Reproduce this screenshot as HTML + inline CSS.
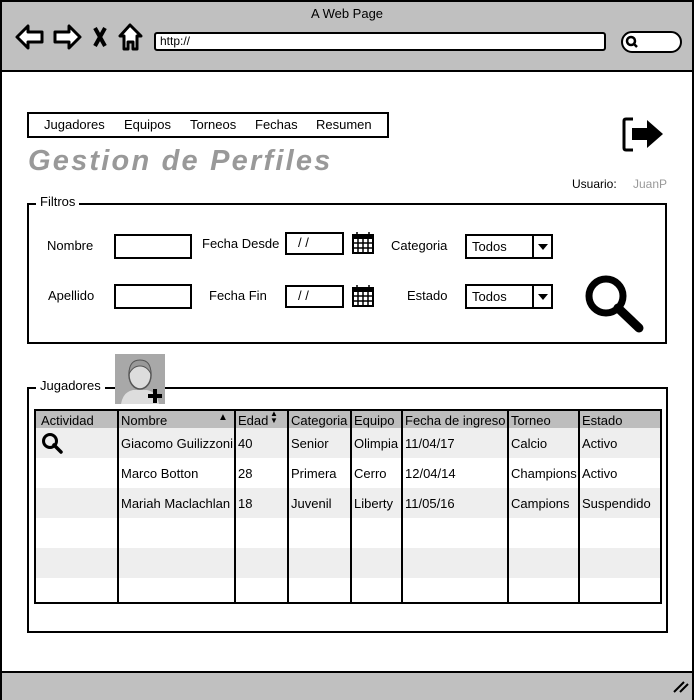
<!DOCTYPE html><html><head><meta charset="utf-8"><style>
body{margin:0;width:694px;height:700px;position:relative;overflow:hidden;background:#fff;font-family:"Liberation Sans",sans-serif;font-size:13px;color:#000}
.a{position:absolute}
.box{position:absolute;border:2px solid #000;box-sizing:border-box;background:#fff}
.t{position:absolute;white-space:nowrap}
.sel{position:absolute;border:2px solid #000;box-sizing:border-box;width:88px;height:25px;background:#fff}
.sel span{position:absolute;left:5px;top:3px}
.sel i{position:absolute;right:0;top:0;width:17px;height:21px;border-left:2px solid #000}
.sel i:after{content:"";position:absolute;left:4px;top:8px;border:5px solid transparent;border-top:6px solid #000}
.row{position:absolute;left:36px;width:624px;height:30px}
.vl{position:absolute;top:411px;width:2px;height:191px;background:#000}
</style></head><body>
<div class="a" style="left:0;top:0;width:694px;height:700px;border:2px solid #000;box-sizing:border-box"></div>
<div class="a" style="left:2px;top:2px;width:690px;height:68px;background:#c0c0c0;border-bottom:2px solid #000"></div>
<div class="a" style="left:2px;top:671px;width:690px;height:27px;background:#c0c0c0;border-top:2px solid #000"></div>
<div class="t" style="left:311px;top:6px">A Web Page</div>
<svg class="a" style="left:14px;top:22px" width="135" height="30" viewBox="0 0 135 30" fill="#fff" stroke="#000" stroke-width="3" stroke-linejoin="round">
<path d="M3 15 L14 4 L14 10 L28 10 L28 20 L14 20 L14 26 Z"/>
<path d="M66 15 L55 4 L55 10 L41 10 L41 20 L55 20 L55 26 Z"/>
<path d="M81 6 L91 24 M91 6 L81 24" stroke-width="4"/>
<path d="M116 3 L106 14 L110 14 L110 27 L114 27 L114 20 L119 20 L119 27 L123 27 L123 14 L127 14 Z"/>
</svg>
<div class="box" style="left:154px;top:32px;width:452px;height:19px;border-radius:3px"></div>
<div class="t" style="left:160px;top:34px;font-size:12px">http://</div>
<div class="box" style="left:621px;top:31px;width:61px;height:22px;border-radius:11px"></div>
<svg class="a" style="left:625px;top:35px" width="14" height="14"><circle cx="6" cy="6" r="4" fill="none" stroke="#000" stroke-width="2.5"/><path d="M9 9 L12 12" stroke="#000" stroke-width="2.5"/></svg>

<div class="box" style="left:27px;top:112px;width:362px;height:26px"></div>
<div class="t" style="left:44px;top:117px">Jugadores</div>
<div class="t" style="left:124px;top:117px">Equipos</div>
<div class="t" style="left:190px;top:117px">Torneos</div>
<div class="t" style="left:255px;top:117px">Fechas</div>
<div class="t" style="left:316px;top:117px">Resumen</div>
<svg class="a" style="left:621px;top:116px" width="44" height="38"><path d="M12 3 L5 3 Q3 3 3 5 L3 32 Q3 34 5 34 L12 34" fill="none" stroke="#000" stroke-width="3"/><path d="M11 12 L26 12 L26 4 L42 18 L26 32 L26 24 L11 24 Z" fill="#000"/></svg>
<div class="t" style="left:28px;top:145px;font-size:29px;font-weight:bold;font-style:italic;color:#999;letter-spacing:2.2px">Gestion de Perfiles</div>
<div class="t" style="left:572px;top:177px;font-size:12px">Usuario:</div>
<div class="t" style="left:633px;top:177px;font-size:12px;color:#999">JuanP</div>

<div class="box" style="left:27px;top:203px;width:640px;height:141px"></div>
<div class="t" style="left:36px;top:194px;background:#fff;padding:0 4px">Filtros</div>
<div class="t" style="left:47px;top:238px">Nombre</div>
<div class="box" style="left:114px;top:234px;width:78px;height:25px"></div>
<div class="t" style="left:202px;top:236px">Fecha Desde</div>
<div class="box" style="left:285px;top:232px;width:59px;height:23px"></div><div class="t" style="left:298px;top:235px">/ /</div>
<div class="t" style="left:391px;top:238px">Categoria</div>
<div class="sel" style="left:465px;top:234px"><span>Todos</span><i></i></div>
<div class="t" style="left:48px;top:288px">Apellido</div>
<div class="box" style="left:114px;top:284px;width:78px;height:25px"></div>
<div class="t" style="left:209px;top:288px">Fecha Fin</div>
<div class="box" style="left:285px;top:285px;width:59px;height:23px"></div><div class="t" style="left:298px;top:288px">/ /</div>
<div class="t" style="left:407px;top:288px">Estado</div>
<div class="sel" style="left:465px;top:284px"><span>Todos</span><i></i></div>
<svg class="a" style="left:351px;top:231px" width="24" height="24"><rect x="2" y="4" width="20" height="18" fill="#fff" stroke="#000" stroke-width="2"/><rect x="2" y="4" width="20" height="4" fill="#000"/><path d="M6 1v6M18 1v6M2 12h20M2 17h20M7 8v14M12 8v14M17 8v14" stroke="#000" stroke-width="1.5"/></svg>
<svg class="a" style="left:351px;top:284px" width="24" height="24"><rect x="2" y="4" width="20" height="18" fill="#fff" stroke="#000" stroke-width="2"/><rect x="2" y="4" width="20" height="4" fill="#000"/><path d="M6 1v6M18 1v6M2 12h20M2 17h20M7 8v14M12 8v14M17 8v14" stroke="#000" stroke-width="1.5"/></svg>
<svg class="a" style="left:582px;top:272px" width="64" height="62"><circle cx="24" cy="24" r="17" fill="none" stroke="#000" stroke-width="7"/><path d="M36 36 L57 56" stroke="#000" stroke-width="9" stroke-linecap="round"/></svg>

<div class="box" style="left:27px;top:387px;width:641px;height:246px"></div>
<div class="t" style="left:36px;top:378px;background:#fff;padding:0 4px">Jugadores</div>
<div class="a" style="left:115px;top:354px;width:50px;height:50px;background:#a8a8a8"></div>
<svg class="a" style="left:115px;top:354px" width="50" height="50"><path d="M6 50 Q8 38 18 36 L32 36 Q42 38 44 50 Z" fill="#ddd"/><ellipse cx="25" cy="21" rx="11" ry="14" fill="#ddd" stroke="#555" stroke-width="1.5"/><path d="M14 20 Q14 6 25 6 Q36 6 36 20 Q32 12 25 12 Q18 12 14 20Z" fill="#999" stroke="#555"/><path d="M33 42h14M40 35v14" stroke="#000" stroke-width="4"/></svg>

<div class="box" style="left:34px;top:409px;width:628px;height:195px"></div>
<div class="row" style="top:411px;height:17px;background:#bdbdbd"></div>
<div class="row" style="top:428px;background:#eee"></div>
<div class="row" style="top:488px;background:#eee"></div>
<div class="row" style="top:548px;background:#eee"></div>
<div class="vl" style="left:117px"></div><div class="vl" style="left:234px"></div><div class="vl" style="left:287px"></div><div class="vl" style="left:350px"></div><div class="vl" style="left:401px"></div><div class="vl" style="left:507px"></div><div class="vl" style="left:578px"></div>
<div class="t" style="left:41px;top:413px">Actividad</div>
<div class="t" style="left:121px;top:413px">Nombre</div>
<div class="t" style="left:218px;top:412px;font-size:10px">▲</div>
<div class="t" style="left:238px;top:413px">Edad</div>
<div class="t" style="left:270px;top:410px;font-size:8px;line-height:7px">▲<br>▼</div>
<div class="t" style="left:291px;top:413px">Categoria</div>
<div class="t" style="left:354px;top:413px">Equipo</div>
<div class="t" style="left:405px;top:413px">Fecha de ingreso</div>
<div class="t" style="left:511px;top:413px">Torneo</div>
<div class="t" style="left:582px;top:413px">Estado</div>
<svg class="a" style="left:41px;top:432px" width="24" height="24"><circle cx="9" cy="9" r="6.5" fill="none" stroke="#000" stroke-width="3"/><path d="M13 13 L20 20" stroke="#000" stroke-width="3.5" stroke-linecap="round"/></svg>
<div class="t" style="left:121px;top:436px">Giacomo Guilizzoni</div><div class="t" style="left:238px;top:436px">40</div><div class="t" style="left:291px;top:436px">Senior</div><div class="t" style="left:354px;top:436px">Olimpia</div><div class="t" style="left:405px;top:436px">11/04/17</div><div class="t" style="left:511px;top:436px">Calcio</div><div class="t" style="left:582px;top:436px">Activo</div>
<div class="t" style="left:121px;top:466px">Marco Botton</div><div class="t" style="left:238px;top:466px">28</div><div class="t" style="left:291px;top:466px">Primera</div><div class="t" style="left:354px;top:466px">Cerro</div><div class="t" style="left:405px;top:466px">12/04/14</div><div class="t" style="left:511px;top:466px">Champions</div><div class="t" style="left:582px;top:466px">Activo</div>
<div class="t" style="left:121px;top:496px">Mariah Maclachlan</div><div class="t" style="left:238px;top:496px">18</div><div class="t" style="left:291px;top:496px">Juvenil</div><div class="t" style="left:354px;top:496px">Liberty</div><div class="t" style="left:405px;top:496px">11/05/16</div><div class="t" style="left:511px;top:496px">Campions</div><div class="t" style="left:582px;top:496px">Suspendido</div>
<svg class="a" style="left:672px;top:678px" width="18" height="16"><path d="M2 14 L12 4 M8 14 L16 6" stroke="#000" stroke-width="2"/></svg>
</body></html>
